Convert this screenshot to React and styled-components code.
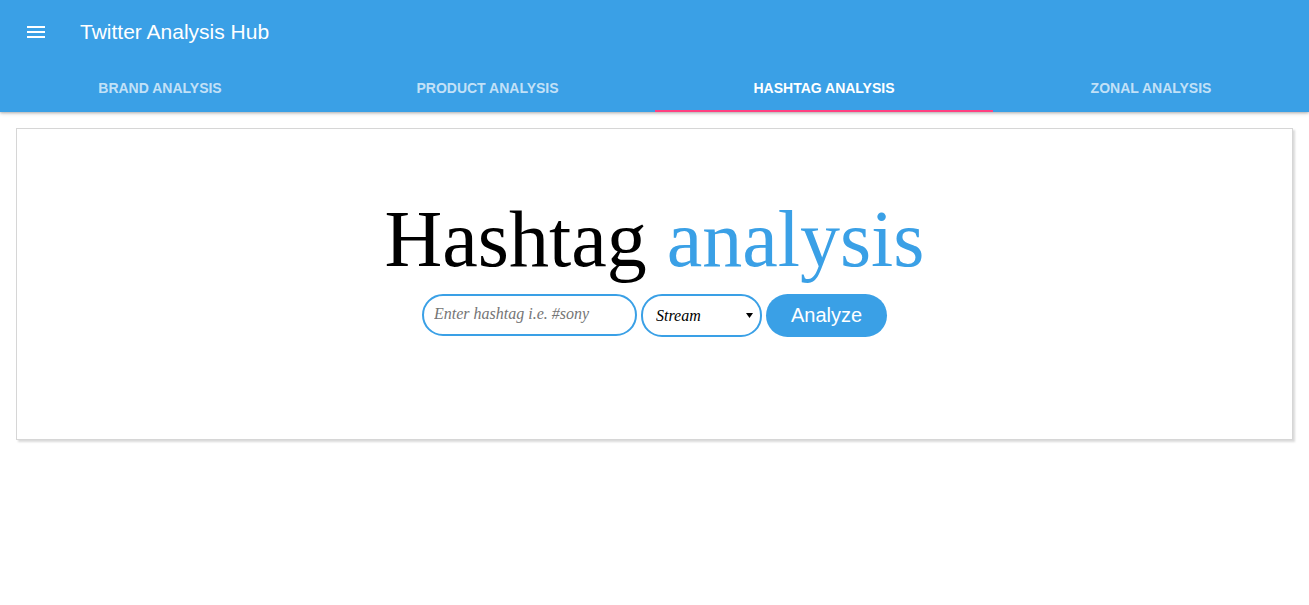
import React from "react";
import styled, { createGlobalStyle } from "styled-components";

const BLUE = "#3aa0e6";

const Global = createGlobalStyle`
  html, body { margin: 0; padding: 0; background: #fff; }
  body { font-family: "Liberation Sans", Arial, sans-serif; }
  * { box-sizing: border-box; }
`;

const AppBar = styled.header`
  background: ${BLUE};
  box-shadow: 0 1px 4px rgba(0, 0, 0, 0.25), 0 1px 2px rgba(0, 0, 0, 0.12);
  position: relative;
  z-index: 1;
`;

const Toolbar = styled.div`
  height: 64px;
  display: flex;
  align-items: center;
  padding-left: 24px;
  gap: 32px;
`;

const MenuButton = styled.button`
  width: 24px;
  height: 24px;
  padding: 0;
  border: 0;
  background: none;
  display: flex;
  cursor: pointer;
`;

const Title = styled.h1`
  margin: 0;
  font-family: "Liberation Sans", Arial, sans-serif;
  font-size: 21px;
  font-weight: 400;
  color: #fff;
  line-height: 64px;
`;

const TabRow = styled.nav`
  display: grid;
  grid-template-columns: 320px 335px 338px 1fr;
  height: 48px;
`;

const Tab = styled.button`
  border: 0;
  background: none;
  padding: 0;
  font-family: "Liberation Sans", Arial, sans-serif;
  font-size: 14px;
  font-weight: 700;
  text-transform: uppercase;
  color: ${(p) => (p.$active ? "#fff" : "rgba(255,255,255,0.7)")};
  border-bottom: 2px solid ${(p) => (p.$active ? "#ff4081" : "transparent")};
  padding-top: 2px;
  cursor: pointer;
`;

const Main = styled.main`
  padding: 16px;
`;

const Card = styled.section`
  border: 1px solid #d6d6d6;
  box-shadow: 2px 2px 2px rgba(0, 0, 0, 0.15);
  padding: 64px 16px 102px;
  display: flex;
  flex-direction: column;
  align-items: center;
`;

const Heading = styled.h2`
  margin: 0 0 9px;
  font-family: "Liberation Serif", "Times New Roman", serif;
  font-size: 80px;
  font-weight: 400;
  line-height: 92px;
  color: #000;
`;

const Accent = styled.span`
  color: ${BLUE};
`;

const Form = styled.form`
  display: flex;
  align-items: flex-start;
  gap: 4px;
`;

const Input = styled.input`
  width: 215px;
  height: 42px;
  border: 2px solid ${BLUE};
  border-radius: 21px;
  padding: 0 10px 2px;
  font-family: "Liberation Serif", serif;
  font-style: italic;
  font-size: 16px;
  outline: none;
  &::placeholder { color: #757575; }
`;

const arrow = encodeURIComponent(
  '<svg xmlns="http://www.w3.org/2000/svg" width="7" height="5"><path d="M0 0h7L3.5 5z" fill="#000"/></svg>'
);

const Select = styled.select`
  appearance: none;
  width: 121px;
  height: 43px;
  border: 2px solid ${BLUE};
  border-radius: 21px;
  padding: 0 0 0 13px;
  font-family: "Liberation Serif", serif;
  font-style: italic;
  font-size: 16px;
  color: #000;
  background: #fff url("data:image/svg+xml,${arrow}") no-repeat right 7px center;
  outline: none;
`;

const Button = styled.button`
  width: 121px;
  height: 43px;
  border: 0;
  border-radius: 22px;
  background: ${BLUE};
  color: #fff;
  font-family: "Liberation Sans", Arial, sans-serif;
  font-size: 20px;
  cursor: pointer;
`;

const tabs = ["Brand Analysis", "Product Analysis", "Hashtag Analysis", "Zonal Analysis"];

export default function App() {
  return (
    <>
      <Global />
      <AppBar>
        <Toolbar>
          <MenuButton aria-label="menu">
            <svg width="24" height="24" viewBox="0 0 24 24">
              <path d="M3 18h18v-2H3v2zm0-5h18v-2H3v2zm0-7v2h18V6H3z" fill="#fff" />
            </svg>
          </MenuButton>
          <Title>Twitter Analysis Hub</Title>
        </Toolbar>
        <TabRow>
          {tabs.map((t, i) => (
            <Tab key={t} $active={i === 2}>
              {t}
            </Tab>
          ))}
        </TabRow>
      </AppBar>
      <Main>
        <Card>
          <Heading>
            Hashtag <Accent>analysis</Accent>
          </Heading>
          <Form onSubmit={(e) => e.preventDefault()}>
            <Input placeholder="Enter hashtag i.e. #sony" />
            <Select defaultValue="stream">
              <option value="stream">Stream</option>
              <option value="search">Search</option>
            </Select>
            <Button type="submit">Analyze</Button>
          </Form>
        </Card>
      </Main>
    </>
  );
}
